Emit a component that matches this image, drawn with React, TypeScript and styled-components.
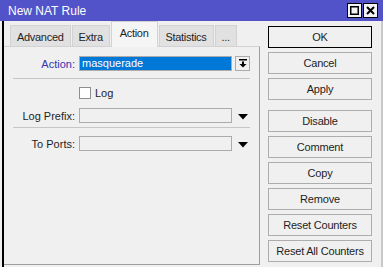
import { createGlobalStyle, styled } from "styled-components";

const Global = createGlobalStyle`
  html, body { margin: 0; padding: 0; background: #f0f0f0; }
  body { font-family: "Liberation Sans", Arial, sans-serif; font-size: 11px; color: #1e1e1e; }
`;

const Window = styled.div`
  width: 383px;
  height: 267px;
  display: flex;
  flex-direction: column;
  background: #f0f0f0;
  overflow: hidden;
`;

const TitleBar = styled.div`
  height: 21px;
  flex: none;
  display: flex;
  align-items: center;
  background: #5252c9;
  color: #fff;
  font-size: 12px;
  padding: 0 5px 0 8px;
`;

const Title = styled.span`
  flex: 1;
`;

const TitleButtons = styled.div`
  display: flex;
  gap: 1px;
`;

const TitleButton = styled.div`
  width: 13px;
  height: 13px;
  border: 1px solid #000;
  background: #f4f4f4;
  display: flex;
  align-items: center;
  justify-content: center;
`;

const Body = styled.div`
  flex: 1;
  display: flex;
  padding-left: 2px;
  border-right: 2px solid #c8c8c8;
  min-height: 0;
`;

const TabArea = styled.div`
  width: 256px;
  display: flex;
  flex-direction: column;
  border-left: 2px solid #000;
  padding-bottom: 2px;
`;

const TabStrip = styled.div`
  height: 26px;
  display: flex;
  align-items: flex-end;
  gap: 1px;
  padding-left: 6px;
  position: relative;
  z-index: 1;
  margin-bottom: -1px;
  letter-spacing: -0.3px;
`;

const Tab = styled.div<{ $active?: boolean }>`
  height: ${({ $active }) => ($active ? "26px" : "22px")};
  padding: 0 ${({ $active }) => ($active ? "8px" : "6px")};
  display: flex;
  align-items: center;
  justify-content: center;
  box-sizing: border-box;
  border: 1px solid #d2d2d2;
  border-bottom: ${({ $active }) => ($active ? "none" : "1px solid #d2d2d2")};
  background: ${({ $active }) => ($active ? "#f5f5f5" : "#e1e1e1")};
  padding-top: ${({ $active }) => ($active ? "0" : "1px")};
  padding-bottom: ${({ $active }) => ($active ? "4px" : "0")};
`;

const Panel = styled.div`
  flex: 1;
  border-top: 1px solid #d2d2d2;
  border-right: 1px solid #9e9e9e;
  border-bottom: 1px solid #9e9e9e;
  padding: 9px 0 0 0;
  display: flex;
  flex-direction: column;
`;

const Row = styled.div<{ $mt?: number }>`
  display: flex;
  align-items: center;
  height: 15px;
  margin-top: ${({ $mt }) => $mt ?? 0}px;
`;

const Label = styled.div<{ $link?: boolean }>`
  width: 71px;
  margin-right: 4px;
  text-align: right;
  color: ${({ $link }) => ($link ? "#3434b0" : "#1e1e1e")};
  white-space: nowrap;
`;

const Input = styled.div<{ $selected?: boolean }>`
  width: 153px;
  height: 15px;
  box-sizing: border-box;
  border: 1px solid #ababab;
  background: ${({ $selected }) => ($selected ? "#0078d7" : "#f0f0f0")};
  color: #fff;
  padding-left: 2px;
  line-height: 13px;
  white-space: nowrap;
`;

const DropBox = styled.div`
  width: 15px;
  height: 15px;
  box-sizing: border-box;
  margin-left: 3px;
  border: 1px solid #ababab;
  background: #f0f0f0;
  display: flex;
  align-items: center;
  justify-content: center;
`;

const DropArrow = styled.div`
  width: 15px;
  margin-left: 3px;
  display: flex;
  justify-content: center;
  padding-top: 2px;
`;

const Separator = styled.div<{ $mt: number }>`
  margin: ${({ $mt }) => $mt}px 0 0 9px;
  width: 237px;
  height: 1px;
  background: #c6c6c6;
`;

const CheckRow = styled.div`
  display: flex;
  align-items: center;
  gap: 4px;
  margin: 8px 0 0 75px;
  height: 12px;
`;

const Checkbox = styled.div`
  width: 12px;
  height: 12px;
  box-sizing: border-box;
  border: 1px solid #8f8f8f;
  background: #fff;
`;

const Buttons = styled.div`
  margin-left: 8px;
  padding-top: 5px;
  display: flex;
  flex-direction: column;
  gap: 4px;
`;

const Button = styled.div<{ $default?: boolean; $spaced?: boolean }>`
  width: 104px;
  height: 22px;
  box-sizing: border-box;
  border: 1px solid ${({ $default }) => ($default ? "#000" : "#adadad")};
  background: #f0f0f0;
  display: flex;
  align-items: center;
  justify-content: center;
  margin-top: ${({ $spaced }) => ($spaced ? "6px" : "0")};
  letter-spacing: -0.2px;
`;

function Triangle() {
  return (
    <svg width="10" height="6" viewBox="0 0 10 6">
      <path d="M0 0H10L5 5.5Z" fill="#000" />
    </svg>
  );
}

function BarArrow() {
  return (
    <svg width="8" height="9" viewBox="0 0 8 9">
      <rect x="0" y="0" width="8" height="1.5" fill="#000" />
      <path d="M3 2.5H5V5H7.5L4 8.5L0.5 5H3Z" fill="#000" />
    </svg>
  );
}

const actions = ["Disable", "Comment", "Copy", "Remove", "Reset Counters", "Reset All Counters"];

export default function App() {
  return (
    <>
      <Global />
      <Window>
        <TitleBar>
          <Title>New NAT Rule</Title>
          <TitleButtons>
            <TitleButton>
              <svg width="9" height="9" viewBox="0 0 9 9">
                <rect x="0.75" y="0.75" width="7.5" height="7.5" fill="none" stroke="#000" strokeWidth="1.5" />
              </svg>
            </TitleButton>
            <TitleButton>
              <svg width="9" height="9" viewBox="0 0 9 9">
                <path d="M1 1L8 8M8 1L1 8" stroke="#000" strokeWidth="2" />
              </svg>
            </TitleButton>
          </TitleButtons>
        </TitleBar>
        <Body>
          <TabArea>
            <TabStrip>
              <Tab>Advanced</Tab>
              <Tab>Extra</Tab>
              <Tab $active>Action</Tab>
              <Tab>Statistics</Tab>
              <Tab>...</Tab>
            </TabStrip>
            <Panel>
              <Row>
                <Label $link>Action:</Label>
                <Input $selected>masquerade</Input>
                <DropBox>
                  <BarArrow />
                </DropBox>
              </Row>
              <Separator $mt={7} />
              <CheckRow>
                <Checkbox />
                <span>Log</span>
              </CheckRow>
              <Row $mt={9}>
                <Label>Log Prefix:</Label>
                <Input />
                <DropArrow>
                  <Triangle />
                </DropArrow>
              </Row>
              <Separator $mt={4} />
              <Row $mt={8}>
                <Label>To Ports:</Label>
                <Input />
                <DropArrow>
                  <Triangle />
                </DropArrow>
              </Row>
            </Panel>
          </TabArea>
          <Buttons>
            <Button $default>OK</Button>
            <Button>Cancel</Button>
            <Button>Apply</Button>
            {actions.map((a, i) => (
              <Button key={a} $spaced={i === 0}>
                {a}
              </Button>
            ))}
          </Buttons>
        </Body>
      </Window>
    </>
  );
}
